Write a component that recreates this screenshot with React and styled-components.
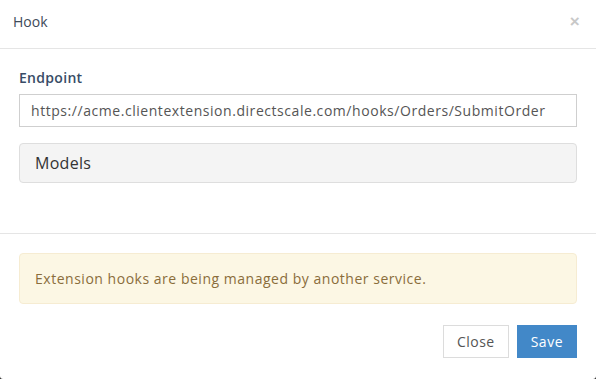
import React from "react";
import styled, { createGlobalStyle } from "styled-components";

const GlobalStyle = createGlobalStyle`
  html, body {
    margin: 0;
    padding: 0;
    background: #2b2b2b;
  }
  body {
    font-family: "Open Sans", "Noto Sans", sans-serif;
    letter-spacing: 0.3px;
  }
`;

const Modal = styled.div`
  width: 596px;
  height: 379px;
  background: #fff;
  border-radius: 0 0 3px 3px;
  display: flex;
  flex-direction: column;
  box-sizing: border-box;
`;

const Header = styled.div`
  border-bottom: 1px solid #e5e5e5;
  display: flex;
  align-items: center;
  justify-content: space-between;
  padding: 0 16px 5px 13px;
  height: 43px;
`;

const Title = styled.div`
  font-size: 14px;
  letter-spacing: 0;
  color: #3e4a59;
`;

const CloseX = styled.span`
  font-family: "Liberation Sans", sans-serif;
  font-size: 17px;
  font-weight: bold;
  color: #c8c8c8;
  line-height: 1;
`;

const Body = styled.div`
  padding: 19px 19px 0;
  height: 165px;
  border-bottom: 1px solid #e5e5e5;
`;

const Label = styled.div`
  font-size: 14px;
  font-weight: 600;
  color: #384c66;
  margin-bottom: 7px;
  line-height: 19px;
`;

const Input = styled.div`
  height: 33px;
  border: 1px solid #cfcfcf;
  box-sizing: border-box;
  display: flex;
  align-items: center;
  padding: 0 11px;
  font-size: 14px;
  letter-spacing: 0.55px;
  color: #555;
  margin-bottom: 16px;
  white-space: nowrap;
`;

const Panel = styled.div`
  height: 40px;
  box-sizing: border-box;
  background: #f4f4f4;
  border: 1px solid #dedede;
  border-radius: 4px;
  display: flex;
  align-items: center;
  padding: 0 15px;
  font-size: 16px;
  color: #333;
`;

const Footer = styled.div`
  padding: 19px 19px 0;
  display: flex;
  flex-direction: column;
`;

const Alert = styled.div`
  height: 51px;
  box-sizing: border-box;
  background: #fcf7e4;
  border: 1px solid #f6ecd2;
  border-radius: 4px;
  display: flex;
  align-items: center;
  padding: 0 15px;
  font-size: 14px;
  letter-spacing: 0.52px;
  color: #8a6d3b;
`;

const Actions = styled.div`
  display: flex;
  justify-content: flex-end;
  gap: 8px;
  margin-top: 21px;
`;

const Button = styled.button`
  height: 33px;
  padding: 0 13px;
  font-family: inherit;
  letter-spacing: 0.5px;
  font-size: 14px;
  border-radius: 0;
  border: 1px solid ${({ primary }) => (primary ? "#4288c8" : "#dcdcdc")};
  background: ${({ primary }) => (primary ? "#4288c8" : "#fff")};
  color: ${({ primary }) => (primary ? "#fff" : "#555")};
  cursor: pointer;
`;

export default function App() {
  return (
    <>
      <GlobalStyle />
      <Modal>
        <Header>
          <Title>Hook</Title>
          <CloseX>×</CloseX>
        </Header>
        <Body>
          <Label>Endpoint</Label>
          <Input>https://acme.clientextension.directscale.com/hooks/Orders/SubmitOrder</Input>
          <Panel>Models</Panel>
        </Body>
        <Footer>
          <Alert>Extension hooks are being managed by another service.</Alert>
          <Actions>
            <Button>Close</Button>
            <Button primary>Save</Button>
          </Actions>
        </Footer>
      </Modal>
    </>
  );
}
